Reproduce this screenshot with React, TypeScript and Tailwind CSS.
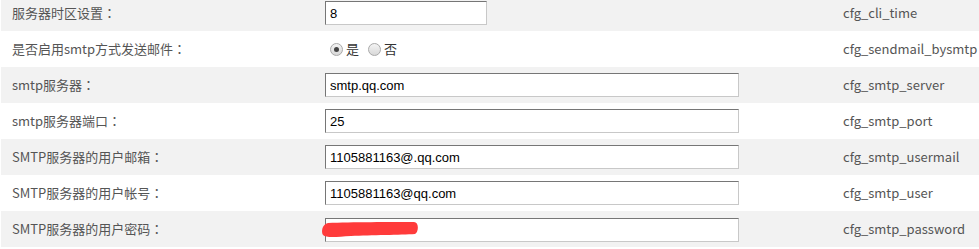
import React from "react";

interface RowProps {
  label: string;
  name: string;
  gray: boolean;
  children: React.ReactNode;
  first?: boolean;
}

const Row = ({ label, name, gray, children, first }: RowProps) => {
  return (
    <div
      className={
        "flex h-[36px] items-center " +
        (gray ? "bg-[#f2f2f2] " : "bg-white ") +
        (first ? "-mt-[5px]" : "")
      }
    >
      <div className="w-[324px] pl-[11px] text-[13px] text-[#555]">
        {label}
        <span style={{ fontFamily: "'Noto Sans CJK TC', sans-serif" }}>：</span>
      </div>
      <div className="w-[518px] flex items-center">{children}</div>
      <div className="text-[13px] text-[#555]">{name}</div>
    </div>
  );
};

const Field = ({ value, short }: { value: string; short?: boolean }) => {
  return (
    <input
      readOnly
      value={value}
      className={
        "h-[24px] bg-white border border-t-[#767676] border-l-[#767676] border-b-[#c8c8c8] border-r-[#c8c8c8] px-[4px] text-[13px] text-black outline-none " +
        (short ? "w-[162px]" : "w-[414px]")
      }
      style={{ fontFamily: "Arial, 'Liberation Sans', sans-serif" }}
    />
  );
};

const Radio = ({ checked }: { checked?: boolean }) => (
  <span className="inline-flex w-[13px] h-[13px] rounded-full border border-[#a9a9a9] bg-gradient-to-b from-[#f4f4f4] to-[#d8d8d8] items-center justify-center">
    {checked && <span className="w-[5px] h-[5px] rounded-full bg-[#444]" />}
  </span>
);

export default function App() {
  return (
    <div
      className="w-[979px] h-[249px] overflow-hidden bg-white pl-[1px]"
      style={{ fontFamily: "'Microsoft YaHei', 'Noto Sans CJK SC', 'Noto Sans', sans-serif" }}
    >
      <Row first gray label="服务器时区设置" name="cfg_cli_time">
        <Field short value="8" />
      </Row>
      <Row gray={false} label="是否启用smtp方式发送邮件" name="cfg_sendmail_bysmtp">
        <div className="flex items-center text-[13px] text-[#333] pl-[5px]">
          <Radio checked />
          <span className="ml-[3px]">是</span>
          <span className="ml-[9px] flex"><Radio /></span>
          <span className="ml-[3px]">否</span>
        </div>
      </Row>
      <Row gray label="smtp服务器" name="cfg_smtp_server">
        <Field value="smtp.qq.com" />
      </Row>
      <Row gray={false} label="smtp服务器端口" name="cfg_smtp_port">
        <Field value="25" />
      </Row>
      <Row gray label="SMTP服务器的用户邮箱" name="cfg_smtp_usermail">
        <Field value="1105881163@.qq.com" />
      </Row>
      <Row gray={false} label="SMTP服务器的用户帐号" name="cfg_smtp_user">
        <Field value="1105881163@qq.com" />
      </Row>
      <Row gray label="SMTP服务器的用户密码" name="cfg_smtp_password">
        <div className="relative">
          <Field value="" />
          <svg className="absolute left-[-4px] top-[5px]" width="100" height="19" viewBox="0 0 100 19">
            <path
              d="M7 2 C30 1 70 1 93 1 C98 1 98 11 94 13 C80 14 50 14 30 15 C15 16 5 17 2 14 C0 11 1 3 7 2 Z"
              fill="#ff3b3b"
            />
          </svg>
        </div>
      </Row>
    </div>
  );
}
